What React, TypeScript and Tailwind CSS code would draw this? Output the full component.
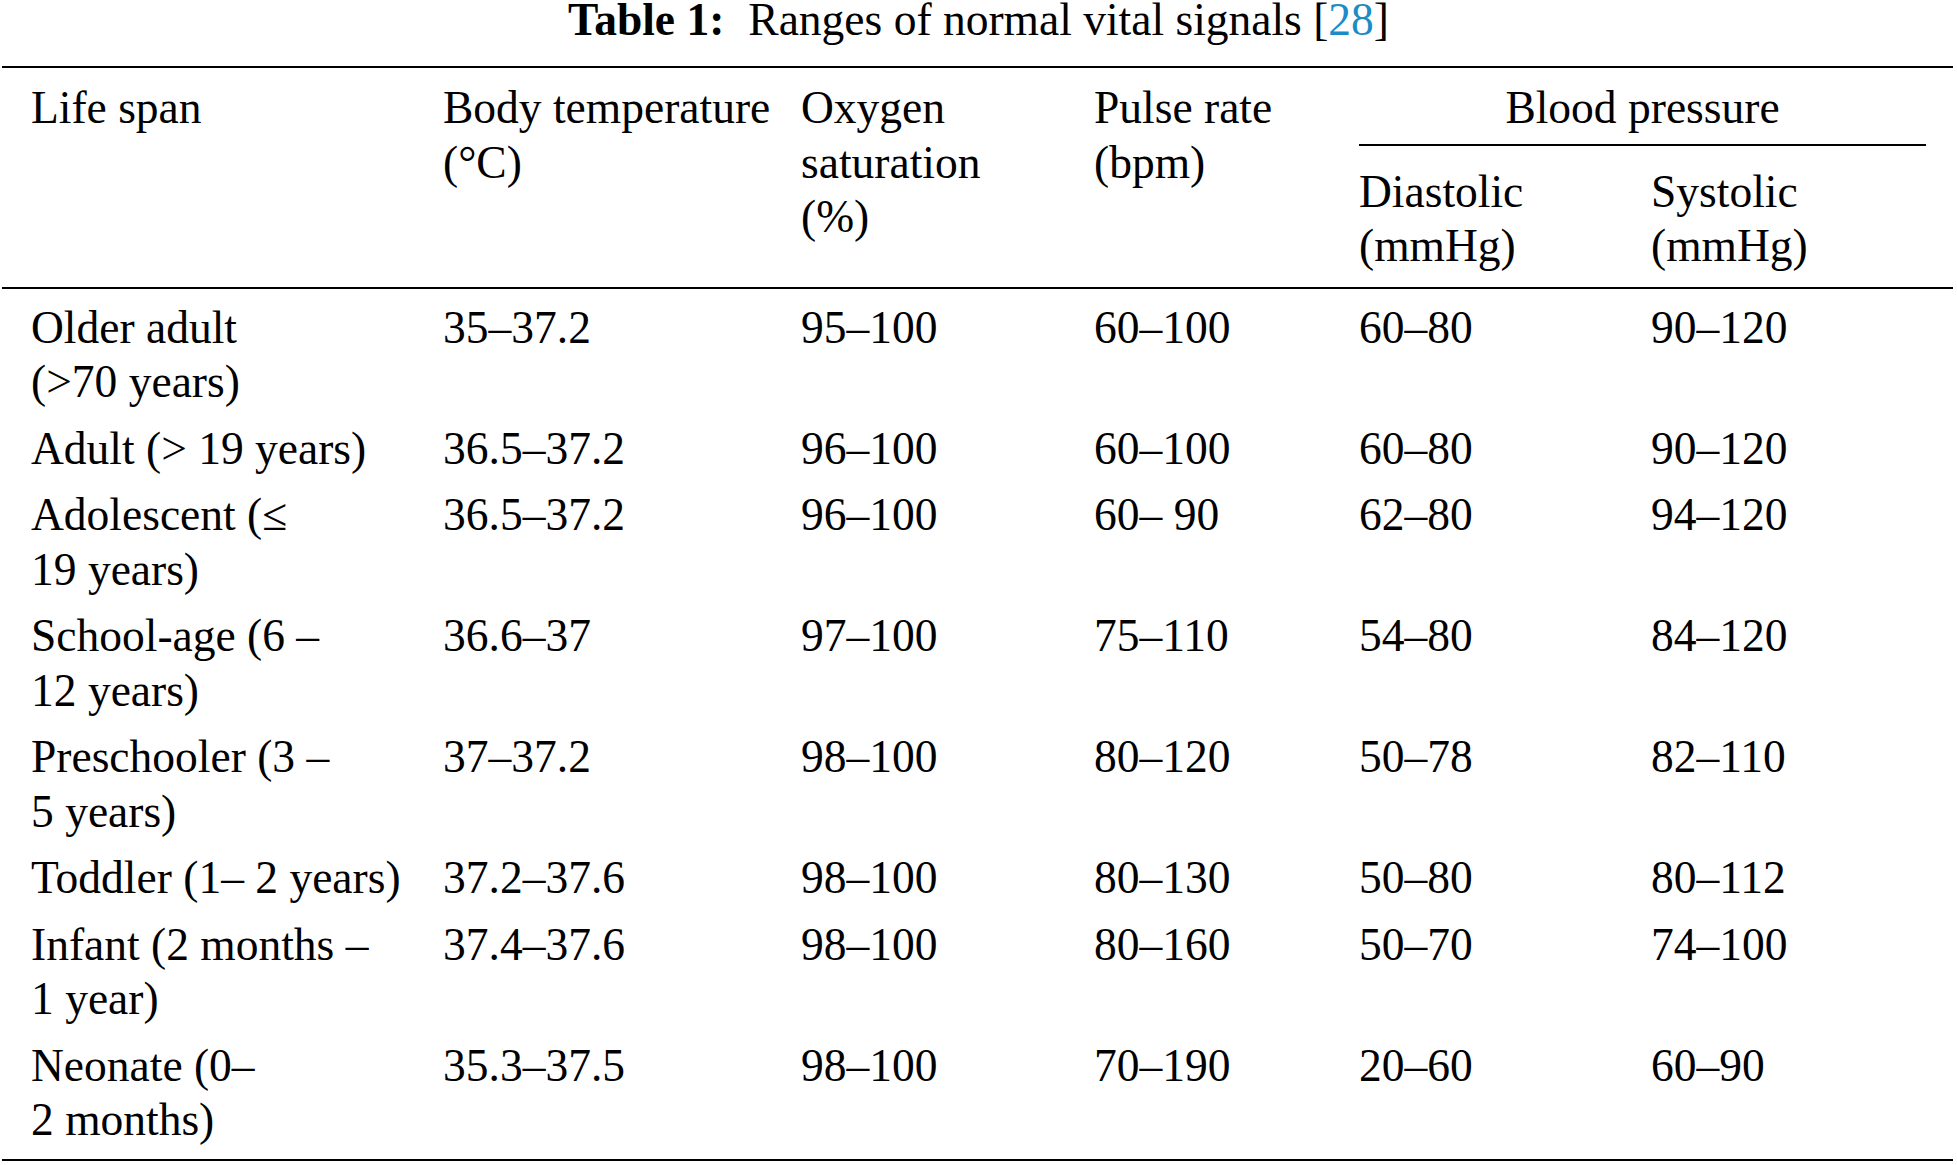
const cols = "grid grid-cols-[412px_358px_293px_265px_293px_1fr]";

const rows = [
  { life: ["Older adult", "(>70 years)"], temp: "35–37.2", oxy: "95–100", pulse: "60–100", dia: "60–80", sys: "90–120" },
  { life: ["Adult (> 19 years)"], temp: "36.5–37.2", oxy: "96–100", pulse: "60–100", dia: "60–80", sys: "90–120" },
  { life: ["Adolescent (≤", "19 years)"], temp: "36.5–37.2", oxy: "96–100", pulse: "60– 90", dia: "62–80", sys: "94–120" },
  { life: ["School-age (6 –", "12 years)"], temp: "36.6–37", oxy: "97–100", pulse: "75–110", dia: "54–80", sys: "84–120" },
  { life: ["Preschooler (3 –", "5 years)"], temp: "37–37.2", oxy: "98–100", pulse: "80–120", dia: "50–78", sys: "82–110" },
  { life: ["Toddler (1– 2 years)"], temp: "37.2–37.6", oxy: "98–100", pulse: "80–130", dia: "50–80", sys: "80–112" },
  { life: ["Infant (2 months –", "1 year)"], temp: "37.4–37.6", oxy: "98–100", pulse: "80–160", dia: "50–70", sys: "74–100" },
  { life: ["Neonate (0–", "2 months)"], temp: "35.3–37.5", oxy: "98–100", pulse: "70–190", dia: "20–60", sys: "60–90" },
];

function Lines({ lines }: { lines: string[] }) {
  return (
    <>
      {lines.map((l) => (
        <div key={l} className="whitespace-nowrap">
          {l}
        </div>
      ))}
    </>
  );
}

export default function App() {
  return (
    <div className="min-h-screen bg-white text-black font-['Liberation_Serif','Times_New_Roman',serif] text-[45.5px] leading-[54.5px]">
      {/* Caption */}
      <div className="pt-[2px] text-center leading-[35px] whitespace-nowrap">
        <span className="font-bold">Table 1:</span>
        <span className="ml-[24px]">
          Ranges of normal vital signals [<span className="text-[#1d8cc6]">28</span>]
        </span>
      </div>

      <div className="ml-[2px] mt-[29px] w-[1951px]">
        {/* Header */}
        <div className={`${cols} border-t-2 border-b-2 border-black pt-[13px] pb-[13px]`}>
          <div className="row-span-2 pl-[29px]">Life span</div>
          <div className="row-span-2 pl-[29px]">
            <Lines lines={["Body temperature", "(°C)"]} />
          </div>
          <div className="row-span-2 pl-[29px]">
            <Lines lines={["Oxygen", "saturation", "(%)"]} />
          </div>
          <div className="row-span-2 pl-[29px]">
            <Lines lines={["Pulse rate", "(bpm)"]} />
          </div>
          <div className="col-span-2 pl-[29px] pr-[27px]">
            <div className="text-center">Blood pressure</div>
            <div className="mt-[8px] h-[2px] bg-black" />
          </div>
          <div className="pl-[29px] pt-[19px]">
            <Lines lines={["Diastolic", "(mmHg)"]} />
          </div>
          <div className="pl-[28px] pt-[19px]">
            <Lines lines={["Systolic", "(mmHg)"]} />
          </div>
        </div>

        {/* Body */}
        <div className={`${cols} border-b-2 border-black pt-[6px] pb-[5px]`}>
          {rows.map((r) => (
            <div key={r.life.join(" ")} className="contents">
              <div className="pl-[29px] py-[6px]">
                <Lines lines={r.life} />
              </div>
              <div className="pl-[29px] py-[6px] whitespace-nowrap">{r.temp}</div>
              <div className="pl-[29px] py-[6px] whitespace-nowrap">{r.oxy}</div>
              <div className="pl-[29px] py-[6px] whitespace-nowrap">{r.pulse}</div>
              <div className="pl-[29px] py-[6px] whitespace-nowrap">{r.dia}</div>
              <div className="pl-[28px] py-[6px] whitespace-nowrap">{r.sys}</div>
            </div>
          ))}
        </div>
      </div>
    </div>
  );
}
